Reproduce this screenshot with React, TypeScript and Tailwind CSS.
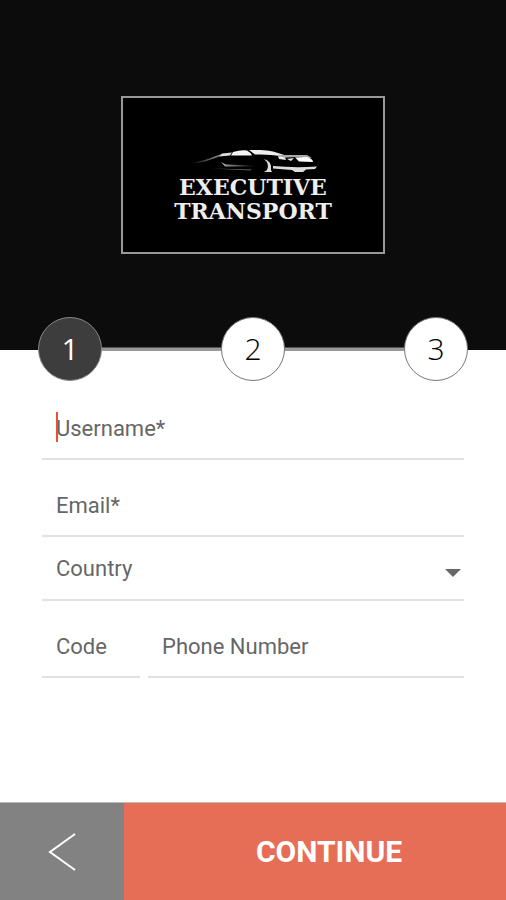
import React, { useState } from 'react';
import clsx from 'clsx';

const steps = [1, 2, 3];

const fieldClass =
  'w-full min-w-0 border-b-2 border-[#e2e2e2] bg-transparent px-[14px] text-[22px] text-[#666] placeholder:text-[#666] placeholder:opacity-100 outline-none';

function CarLogo() {
  return (
    <svg viewBox="0 0 130 25" className="h-[25px] w-[130px]" aria-hidden="true">
      <defs>
        <linearGradient id="fadeLeft" x1="0" x2="1">
          <stop offset="0" stopColor="#fff" stopOpacity="0" />
          <stop offset="1" stopColor="#fff" stopOpacity="0.6" />
        </linearGradient>
        <linearGradient id="fadeRight" x1="0" x2="1">
          <stop offset="0" stopColor="#fff" stopOpacity="0.7" />
          <stop offset="1" stopColor="#fff" stopOpacity="0" />
        </linearGradient>
      </defs>
      {/* tail and roof */}
      <path d="M2 13 C14 12 24 7 34 4 L32 6 C22 10 14 13.5 2 13Z" fill="url(#fadeLeft)" />
      <path d="M34 3.5 L44 2.5 L42 5.5 L31 6.5Z" fill="#ddd" />
      <path d="M45 2 Q53 -0.5 59 0.5 Q62 2 64 5.5 L43 5.5Z" fill="#f4f4f4" />
      <path d="M61 0 Q76 -0.5 85 1.5 L98 5.5 L92 6 Q82 4 67 4.5Z" fill="#eee" />
      {/* body side */}
      <path d="M33 12 L38 14.5 L66 15.5 L66 16.5 L37 16.5Z" fill="url(#fadeRight)" />
      <path d="M24 18.5 L64 19.5 L62 20.5Z" fill="#666" />
      {/* front wheel */}
      <path d="M76 9 Q84 11 83 20 L84 22 L76 22 L79 20 Q82 14 76 9Z" fill="#ddd" />
      {/* bonnet and lights */}
      <path d="M90 5 L119 5 L124 8 L107 7 L93 8Z" fill="#aaa" />
      <path d="M90 6 L97 7.5 L98 10 L91 9Z" fill="#eee" />
      <path d="M99 9 L106 8 L103 11Z" fill="#eee" />
      <path d="M107 7.5 L119 7 Q125 9 125 12 L111 11.5Z" fill="#fff" />
      <path d="M85 16 Q106 18 129 16.5 L127 19 L118 19.5 L115 22 L107 22 L104 20 L85 18.5Z" fill="#ddd" />
    </svg>
  );
}

function Stepper({ current }: { current: number }) {
  return (
    <ol className="-mt-[33px] flex items-center px-[38px]">
      {steps.map((step) => (
        <React.Fragment key={step}>
          {step > 1 && <li aria-hidden="true" className="h-1 flex-1 border-t border-[#555] bg-[#999]" />}
          <li
            aria-current={step === current ? 'step' : undefined}
            className={clsx(
              'flex size-16 items-center justify-center rounded-full border pb-0.5 font-["Open_Sans","Noto_Sans",sans-serif] text-[30px]',
              step === current
                ? 'border-[#888] bg-[#3d3d3d] text-white'
                : 'border-[#777] bg-white font-light text-black'
            )}
          >
            {step}
          </li>
        </React.Fragment>
      ))}
    </ol>
  );
}

export default function App() {
  const [form, setForm] = useState({ username: '', email: '', country: '', code: '', phone: '' });

  const handleChange = (e: React.ChangeEvent<HTMLInputElement | HTMLSelectElement>) => {
    setForm({ ...form, [e.target.name]: e.target.value });
  };

  return (
    <form
      onSubmit={(e) => e.preventDefault()}
      className="flex min-h-screen flex-col bg-white font-[Roboto,sans-serif]"
    >
      {/* Header */}
      <header className="flex justify-center bg-[#0c0c0c] px-8 py-24">
        <div className="flex w-full max-w-[264px] flex-col items-center border-2 border-[#999] bg-black pt-[52px] pb-[29px]">
          <CarLogo />
          <h1 className='text-center font-["DejaVu_Serif",serif] text-[22px] leading-6 font-bold text-[#eee]'>
            EXECUTIVE
            <br />
            TRANSPORT
          </h1>
        </div>
      </header>

      <Stepper current={1} />

      {/* Fields */}
      <main className="flex flex-1 flex-col px-[42px] pt-[19px]">
        <div className="relative">
          <input
            name="username"
            aria-label="Username"
            value={form.username}
            onChange={handleChange}
            placeholder="Username*"
            className={clsx(fieldClass, 'h-[60px] pb-0.5')}
          />
          <span aria-hidden="true" className="absolute top-3 left-[14px] h-[30px] w-[2px] bg-[#e8532f]" />
        </div>

        <input
          name="email"
          type="email"
          aria-label="Email"
          value={form.email}
          onChange={handleChange}
          placeholder="Email*"
          className={clsx(fieldClass, 'mt-[17px] h-[60px] pb-0.5')}
        />

        <div className="relative">
          <select
            name="country"
            aria-label="Country"
            value={form.country}
            onChange={handleChange}
            className={clsx(fieldClass, 'h-16 appearance-none')}
          >
            <option value="">Country</option>
            <option value="us">United States</option>
            <option value="gb">United Kingdom</option>
          </select>
          <svg
            viewBox="0 0 16 8"
            className="pointer-events-none absolute top-8 right-[3px] h-2 w-4"
            aria-hidden="true"
          >
            <path d="M0 0H16L8 8Z" fill="#686868" />
          </svg>
        </div>

        <div className="mt-[17px] grid grid-cols-[98px_1fr] gap-2">
          <input
            name="code"
            aria-label="Code"
            value={form.code}
            onChange={handleChange}
            placeholder="Code"
            className={clsx(fieldClass, 'h-[60px] pb-0.5')}
          />
          <input
            name="phone"
            type="tel"
            aria-label="Phone Number"
            value={form.phone}
            onChange={handleChange}
            placeholder="Phone Number"
            className={clsx(fieldClass, 'h-[60px] pb-0.5')}
          />
        </div>
      </main>

      {/* Bottom actions */}
      <footer className="flex h-[98px] border-t border-[#bbb]">
        <button type="button" aria-label="Back" className="flex w-[124px] items-center justify-center bg-[#828282]">
          <svg viewBox="0 0 28 38" className="h-[38px] w-7" fill="none" stroke="#fff" strokeWidth="2">
            <path d="M27 1 L2 19 L27 37" />
          </svg>
        </button>
        <button type="submit" className="flex-1 bg-[#e66e57] pl-7 text-[30px] font-bold text-white">
          CONTINUE
        </button>
      </footer>
    </form>
  );
}
